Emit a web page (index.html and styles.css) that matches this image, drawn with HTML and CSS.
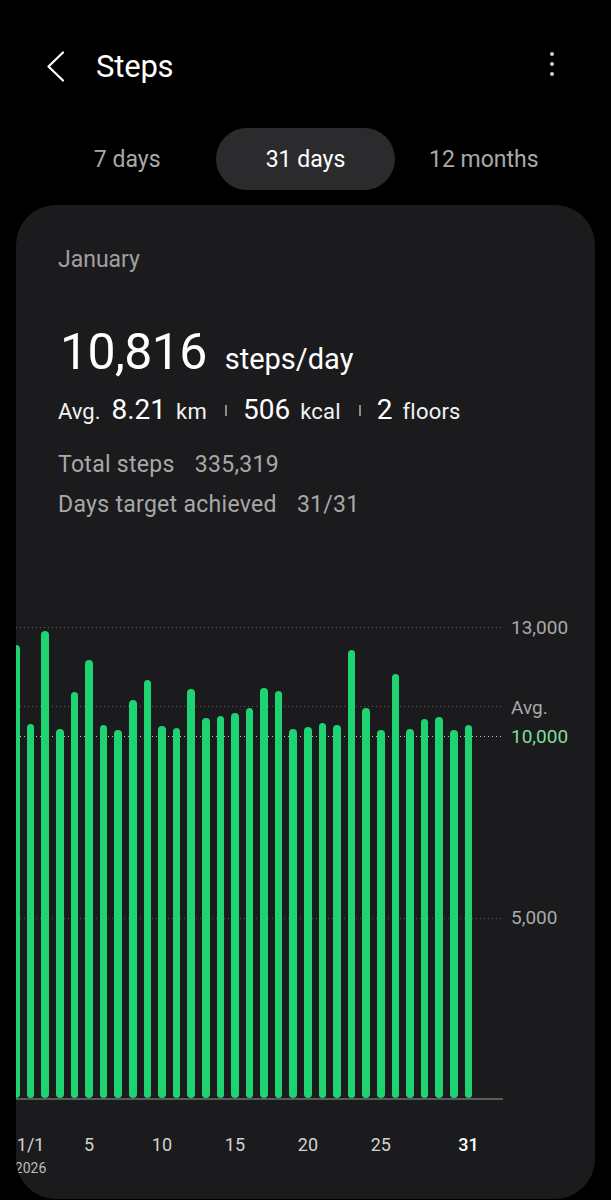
FILE: index.html
```html
<!DOCTYPE html>
<html lang="en">
<head>
  <meta charset="UTF-8">
  <title>Steps</title>
  <meta name="viewport" content="width=device-width, initial-scale=1">
  <link rel="stylesheet" href="styles.css">
</head>
<body>

  <div class="topbar">
    <svg class="back" width="20" height="31" viewBox="0 0 20 31">
      <path d="M17 1.5 L2.5 15.5 L17 29.5" fill="none" stroke="#fff" stroke-width="2.2" stroke-linecap="round" stroke-linejoin="round"/>
    </svg>
    <h1>Steps</h1>
    <span class="more"><i></i><i></i><i></i></span>
  </div>

  <div class="tabs">
    <button class="tab">7 days</button>
    <button class="tab active">31 days</button>
    <button class="tab">12 months</button>
  </div>

  <div class="card">
    <div class="summary">
      <p class="month">January</p>

      <p class="big">
        <span class="big-num">10,816</span>
        <span class="big-unit">steps/day</span>
      </p>

      <div class="avg-row">
        <span class="lbl">Avg.</span>
        <span class="num">8.21</span><span class="unit">km</span>
        <span class="sep"></span>
        <span class="num">506</span><span class="unit">kcal</span>
        <span class="sep"></span>
        <span class="num">2</span><span class="unit">floors</span>
      </div>

      <p class="line">Total steps<span class="val">335,319</span></p>
      <p class="line">Days target achieved<span class="val">31/31</span></p>
    </div>

    <div class="chart">
      <div class="plot">
        <div class="grid" style="bottom:472px"></div>
        <div class="grid" style="bottom:393px"></div>
        <div class="grid target" style="bottom:363px"></div>
        <div class="grid" style="bottom:181px"></div>
        <div class="baseline"></div>

        <div class="bars">
          <div class="bar" style="height:453px"></div>
          <div class="bar" style="height:374px"></div>
          <div class="bar" style="height:467px"></div>
          <div class="bar" style="height:369px"></div>
          <div class="bar" style="height:406px"></div>
          <div class="bar" style="height:438px"></div>
          <div class="bar" style="height:373px"></div>
          <div class="bar" style="height:368px"></div>
          <div class="bar" style="height:398px"></div>
          <div class="bar" style="height:418px"></div>
          <div class="bar" style="height:372px"></div>
          <div class="bar" style="height:370px"></div>
          <div class="bar" style="height:409px"></div>
          <div class="bar" style="height:380px"></div>
          <div class="bar" style="height:382px"></div>
          <div class="bar" style="height:385px"></div>
          <div class="bar" style="height:390px"></div>
          <div class="bar" style="height:410px"></div>
          <div class="bar" style="height:407px"></div>
          <div class="bar" style="height:369px"></div>
          <div class="bar" style="height:371px"></div>
          <div class="bar" style="height:375px"></div>
          <div class="bar" style="height:373px"></div>
          <div class="bar" style="height:448px"></div>
          <div class="bar" style="height:390px"></div>
          <div class="bar" style="height:368px"></div>
          <div class="bar" style="height:424px"></div>
          <div class="bar" style="height:369px"></div>
          <div class="bar" style="height:379px"></div>
          <div class="bar" style="height:381px"></div>
          <div class="bar" style="height:368px"></div>
          <div class="bar" style="height:373px"></div>
        </div>
      </div>

      <div class="yaxis">
        <span class="ylabel" style="bottom:472px">13,000</span>
        <span class="ylabel" style="bottom:392px">Avg.</span>
        <span class="ylabel target" style="bottom:363px">10,000</span>
        <span class="ylabel" style="bottom:182px">5,000</span>
      </div>
    </div>

    <div class="xaxis">
      <div class="xcell"></div>
      <div class="xcell"><span>1/1</span><small>2026</small></div>
      <div class="xcell"></div>
      <div class="xcell"></div>
      <div class="xcell"></div>
      <div class="xcell"><span>5</span></div>
      <div class="xcell"></div>
      <div class="xcell"></div>
      <div class="xcell"></div>
      <div class="xcell"></div>
      <div class="xcell"><span>10</span></div>
      <div class="xcell"></div>
      <div class="xcell"></div>
      <div class="xcell"></div>
      <div class="xcell"></div>
      <div class="xcell"><span>15</span></div>
      <div class="xcell"></div>
      <div class="xcell"></div>
      <div class="xcell"></div>
      <div class="xcell"></div>
      <div class="xcell"><span>20</span></div>
      <div class="xcell"></div>
      <div class="xcell"></div>
      <div class="xcell"></div>
      <div class="xcell"></div>
      <div class="xcell"><span>25</span></div>
      <div class="xcell"></div>
      <div class="xcell"></div>
      <div class="xcell"></div>
      <div class="xcell"></div>
      <div class="xcell"></div>
      <div class="xcell today"><span>31</span></div>
    </div>
  </div>

</body>
</html>
```

FILE: styles.css
```css
body {
  margin:0;
  background:#000;
  color:#fff;
  font-family:Roboto, "Noto Sans", sans-serif;
}

p {
  margin:0;
}

/* header */
.topbar {
  display:flex;
  align-items:center;
  height:60px;
  margin-top:36px;
  padding:0 57px 0 46px;
}
.topbar h1 {
  margin:0 0 0 30px;
  font-size:31px;
  font-weight:400;
  letter-spacing:-.2px;
}
.more {
  margin-left:auto;
  margin-top:-4px;
  display:flex;
  flex-direction:column;
  gap:6px;
}
.more i {
  display:block;
  width:4px;
  height:4px;
  border-radius:50%;
  background:#c9d0cc;
}

/* period tabs */
.tabs {
  display:grid;
  grid-template-columns:repeat(3, 1fr);
  height:62px;
  margin-top:32px;
  padding:0 38px;
}
.tab {
  border:0;
  background:none;
  border-radius:31px;
  font-family:inherit;
  font-size:23px;
  color:#a9a9a9;
  -webkit-appearance:none;
}
.tab.active {
  background:#2b2b2d;
  color:#fff;
}

/* card */
.card {
  margin:15px 16px 0;
  background:#1b1b1d;
  border-radius:40px;
  padding-bottom:22px;
  overflow:hidden;
}
.summary {
  padding:42px 42px 0;
}
.month {
  font-size:23px;
  line-height:26px;
  color:#a0a0a0;
}
.big {
  margin-top:49px;
  line-height:60px;
  height:60px;
}
.big-num {
  font-size:50px;
  letter-spacing:-.6px;
  margin-left:2px;
}
.big-unit {
  font-size:29px;
  margin-left:14px;
}
.avg-row {
  display:flex;
  align-items:baseline;
  margin-top:11px;
  line-height:34px;
  height:34px;
  font-size:22px;
  color:#f2f2f2;
}
.avg-row .lbl {
  margin-right:11px;
}
.avg-row .num {
  font-size:28px;
  color:#fff;
}
.avg-row .unit {
  margin-left:10px;
  letter-spacing:.2px;
}
.avg-row .sep {
  align-self:center;
  width:2px;
  height:11px;
  margin:0 16px 0 18px;
  background:#8a8a8a;
}
.line {
  font-size:23px;
  letter-spacing:.3px;
  line-height:40px;
  color:#a8a8a8;
}
.line .val {
  margin-left:20px;
}
.avg-row + .line {
  margin-top:18px;
}

/* chart */
.chart {
  display:flex;
  height:500px;
  margin-top:75px;
}
.plot {
  position:relative;
  width:487px;
  overflow:hidden;
}
.grid {
  position:absolute;
  left:0;
  right:0;
  height:1px;
  background-image:linear-gradient(to right, #5a5a5a 1.5px, transparent 1.5px);
  background-size:4px 1px;
}
.grid.target {
  background-image:linear-gradient(to right, #c8c8c8 1.5px, transparent 1.5px);
}
.baseline {
  position:absolute;
  left:0;
  right:0;
  bottom:0;
  height:2px;
  background:#5b5b5b;
}
.bars {
  position:relative;
  display:flex;
  align-items:flex-end;
  gap:7px;
  height:100%;
  box-sizing:border-box;
  padding-bottom:2px;
  margin-left:-3.8px;
}
.bar {
  flex:none;
  width:7.6px;
  border-radius:4px;
  background:#1ed371;
}
.yaxis {
  position:relative;
  flex:1;
}
.ylabel {
  position:absolute;
  left:8px;
  transform:translateY(50%);
  font-size:19px;
  line-height:22px;
  color:#a9a9a9;
}
.ylabel.target {
  color:#7fdc9c;
}

/* x axis */
.xaxis {
  display:flex;
  gap:7px;
  margin:34px 0 0 -3.8px;
  height:43px;
}
.xcell {
  flex:none;
  width:7.6px;
  display:flex;
  flex-direction:column;
  align-items:center;
  white-space:nowrap;
  color:#d2d2d2;
}
.xcell span {
  font-size:18px;
  line-height:22px;
}
.xcell small {
  margin-top:3px;
  font-size:14px;
  line-height:18px;
  color:#bdbdbd;
}
.xcell.today span {
  color:#fff;
  font-weight:500;
}
```
